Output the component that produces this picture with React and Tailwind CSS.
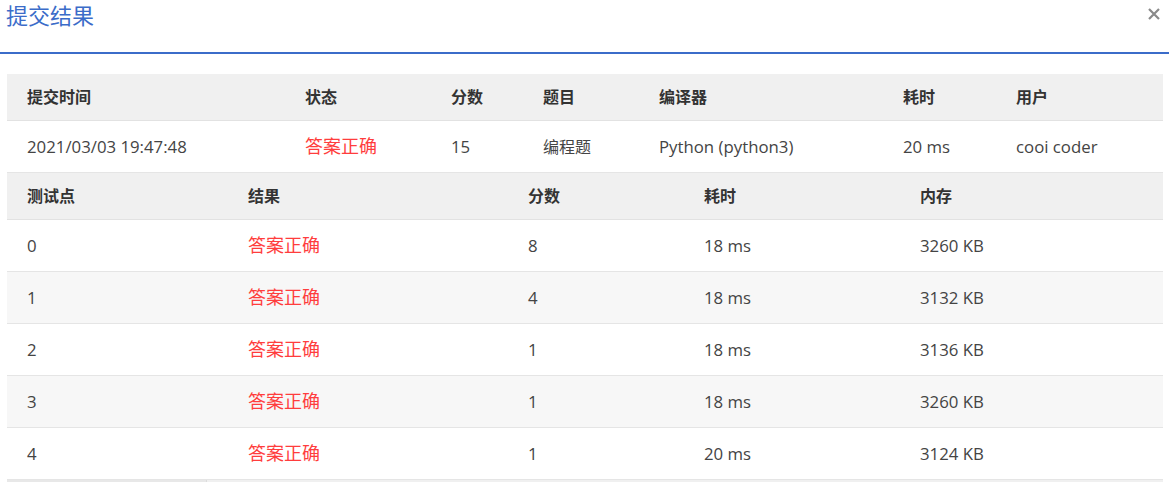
import React from 'react';

const font = { fontFamily: '"Open Sans", "Noto Sans CJK SC", sans-serif' };

const summaryCols = [
  { label: '提交时间', w: 'w-[278px]' },
  { label: '状态', w: 'w-[146px]' },
  { label: '分数', w: 'w-[92px]' },
  { label: '题目', w: 'w-[116px]' },
  { label: '编译器', w: 'w-[244px]' },
  { label: '耗时', w: 'w-[113px]' },
  { label: '用户', w: 'flex-1' },
];

const summary = ['2021/03/03 19:47:48', '答案正确', '15', '编程题', 'Python (python3)', '20 ms', 'cooi coder'];

const caseCols = [
  { label: '测试点', w: 'w-[221px]' },
  { label: '结果', w: 'w-[280px]' },
  { label: '分数', w: 'w-[176px]' },
  { label: '耗时', w: 'w-[216px]' },
  { label: '内存', w: 'flex-1' },
];

const cases = [
  ['0', '答案正确', '8', '18 ms', '3260 KB'],
  ['1', '答案正确', '4', '18 ms', '3132 KB'],
  ['2', '答案正确', '1', '18 ms', '3136 KB'],
  ['3', '答案正确', '1', '18 ms', '3260 KB'],
  ['4', '答案正确', '1', '20 ms', '3124 KB'],
];

// red = status text, cjk = plain chinese value (smaller than latin)
function Cell({ w, children, red, cjk }) {
  let cls = 'text-[#444] text-[16.8px]';
  if (red) cls = 'text-[#ff3d3d] text-[18px]';
  else if (cjk) cls = 'text-[#444] text-[16px]';
  return <div className={`${w} pl-5 ${cls}`}>{children}</div>;
}

function HeaderRow({ cols }) {
  return (
    <div className="flex items-center h-[47px] bg-[#f0f0f0] border-b border-[#e2e2e2]">
      {cols.map((c) => (
        <div key={c.label} className={`${c.w} pl-5 text-[16px] font-bold text-[#333]`}>
          {c.label}
        </div>
      ))}
    </div>
  );
}

export default function App() {
  return (
    <div className="w-[1169px] h-[482px] bg-white overflow-hidden" style={font}>
      <div className="relative h-[54px] border-b-2 border-[#3b6cc9]">
        <div className="pl-[6px] text-[22px] leading-[30px] text-[#3b6cc9]">提交结果</div>
        <button className="absolute right-[8px] top-[7px]">
          <svg width="14" height="14" viewBox="0 0 14 14">
            <path d="M2 2 L12 12 M12 2 L2 12" stroke="#8a8a8a" strokeWidth="2.2" />
          </svg>
        </button>
      </div>

      <div className="mx-[7px] mt-[20px] w-[1156px]">
        <HeaderRow cols={summaryCols} />
        <div className="flex items-center h-[52px] bg-white border-b border-[#e5e5e5]">
          {summary.map((v, i) => (
            <Cell key={i} w={summaryCols[i].w} red={i === 1} cjk={i === 3}>
              {v}
            </Cell>
          ))}
        </div>

        <HeaderRow cols={caseCols} />
        {cases.map((row, r) => (
          <div
            key={r}
            className={`flex items-center h-[52px] border-b border-[#e5e5e5] ${r % 2 === 1 ? 'bg-[#f7f7f7]' : 'bg-white'}`}
          >
            {row.map((v, i) => (
              <Cell key={i} w={caseCols[i].w} red={i === 1}>
                {v}
              </Cell>
            ))}
          </div>
        ))}
        <div className="flex h-[2px]">
          <div className="w-[199px] bg-[#e8e8e8]" />
          <div className="flex-1 bg-[#f0f0f0] border-l border-[#dcdcdc]" />
        </div>
      </div>
    </div>
  );
}
